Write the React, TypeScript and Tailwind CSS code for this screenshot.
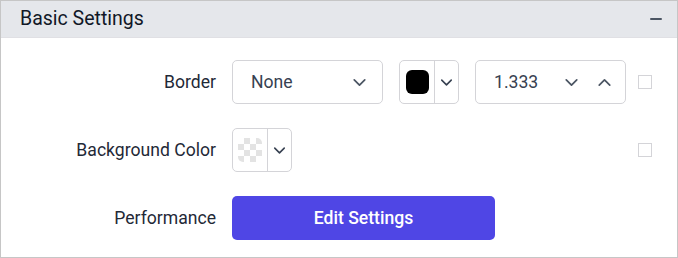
import { ChevronDown, ChevronUp } from "lucide-react";

const Checker = () => {
  const cells = [];
  for (let r = 0; r < 4; r++) {
    for (let c = 0; c < 4; c++) {
      cells.push(
        <div
          key={`${r}-${c}`}
          className={(r + c) % 2 === 1 ? "bg-[#e3e3e3]" : "bg-white"}
        />
      );
    }
  }
  return (
    <div className="grid h-[24px] w-[24px] grid-cols-4 grid-rows-4 overflow-hidden rounded-[5px]">
      {cells}
    </div>
  );
};

const ColorPicker = ({ transparent }: { transparent?: boolean }) => (
  <div className="flex h-[44px] w-[60px] items-center rounded-[5px] border border-[#d4d4d8] bg-white">
    <div className="flex h-full w-[35px] items-center justify-center border-r border-[#d4d4d8]">
      {transparent ? (
        <Checker />
      ) : (
        <div className="h-[24px] w-[23px] rounded-[6px] bg-black" />
      )}
    </div>
    <div className="flex flex-1 items-center justify-center">
      <ChevronDown size={19} strokeWidth={2} className="text-[#374151]" />
    </div>
  </div>
);

const Box = () => (
  <div className="h-[14px] w-[14px] border border-[#d4d4d8] bg-white" />
);

export default function App() {
  return (
    <div
      className="h-[258px] w-[678px] overflow-hidden border border-[#c6c6c6] bg-white"
      style={{ fontFamily: "Roboto, 'Liberation Sans', sans-serif" }}
    >
      <div className="flex h-[37px] items-center justify-between border-b border-[#e0e0e4] bg-[#e5e7eb] pl-[19px] pr-[15px]">
        <span className="text-[19.5px] text-[#111827]">Basic Settings</span>
        <div className="h-[2px] w-[12px] rounded-full bg-[#4b5563]" />
      </div>

      <div className="grid grid-cols-[219px_auto_1fr] items-center gap-x-3 gap-y-6 pt-[22px]">
        <div className="pr-[4px] text-right text-[17.6px] text-[#1f2937]">Border</div>
        <div className="flex items-center gap-4">
          <div className="flex h-[44px] w-[151px] items-center justify-between rounded-[5px] border border-[#d4d4d8] bg-white pl-[18px] pr-[12px]">
            <span className="text-[17.6px] text-[#374151]">None</span>
            <ChevronDown size={21} strokeWidth={2} className="text-[#4b5563]" />
          </div>
          <ColorPicker />
          <div className="flex h-[44px] w-[151px] items-center rounded-[5px] border border-[#d4d4d8] bg-white pl-[18px] pr-[10px]">
            <span className="flex-1 text-[17.6px] text-[#374151]">1.333</span>
            <ChevronDown size={21} strokeWidth={2} className="mr-[12px] text-[#4b5563]" />
            <ChevronUp size={21} strokeWidth={2} className="text-[#4b5563]" />
          </div>
        </div>
        <div>
          <Box />
        </div>

        <div className="pr-[4px] text-right text-[17.6px] text-[#1f2937]">Background Color</div>
        <div>
          <ColorPicker transparent />
        </div>
        <div>
          <Box />
        </div>

        <div className="pr-[4px] text-right text-[17.6px] text-[#1f2937]">Performance</div>
        <div>
          <button className="flex h-[44px] w-[263px] items-center justify-center rounded-[5px] bg-[#4f46e5] text-[17.6px] font-medium text-white">
            Edit Settings
          </button>
        </div>
        <div />
      </div>
    </div>
  );
}
